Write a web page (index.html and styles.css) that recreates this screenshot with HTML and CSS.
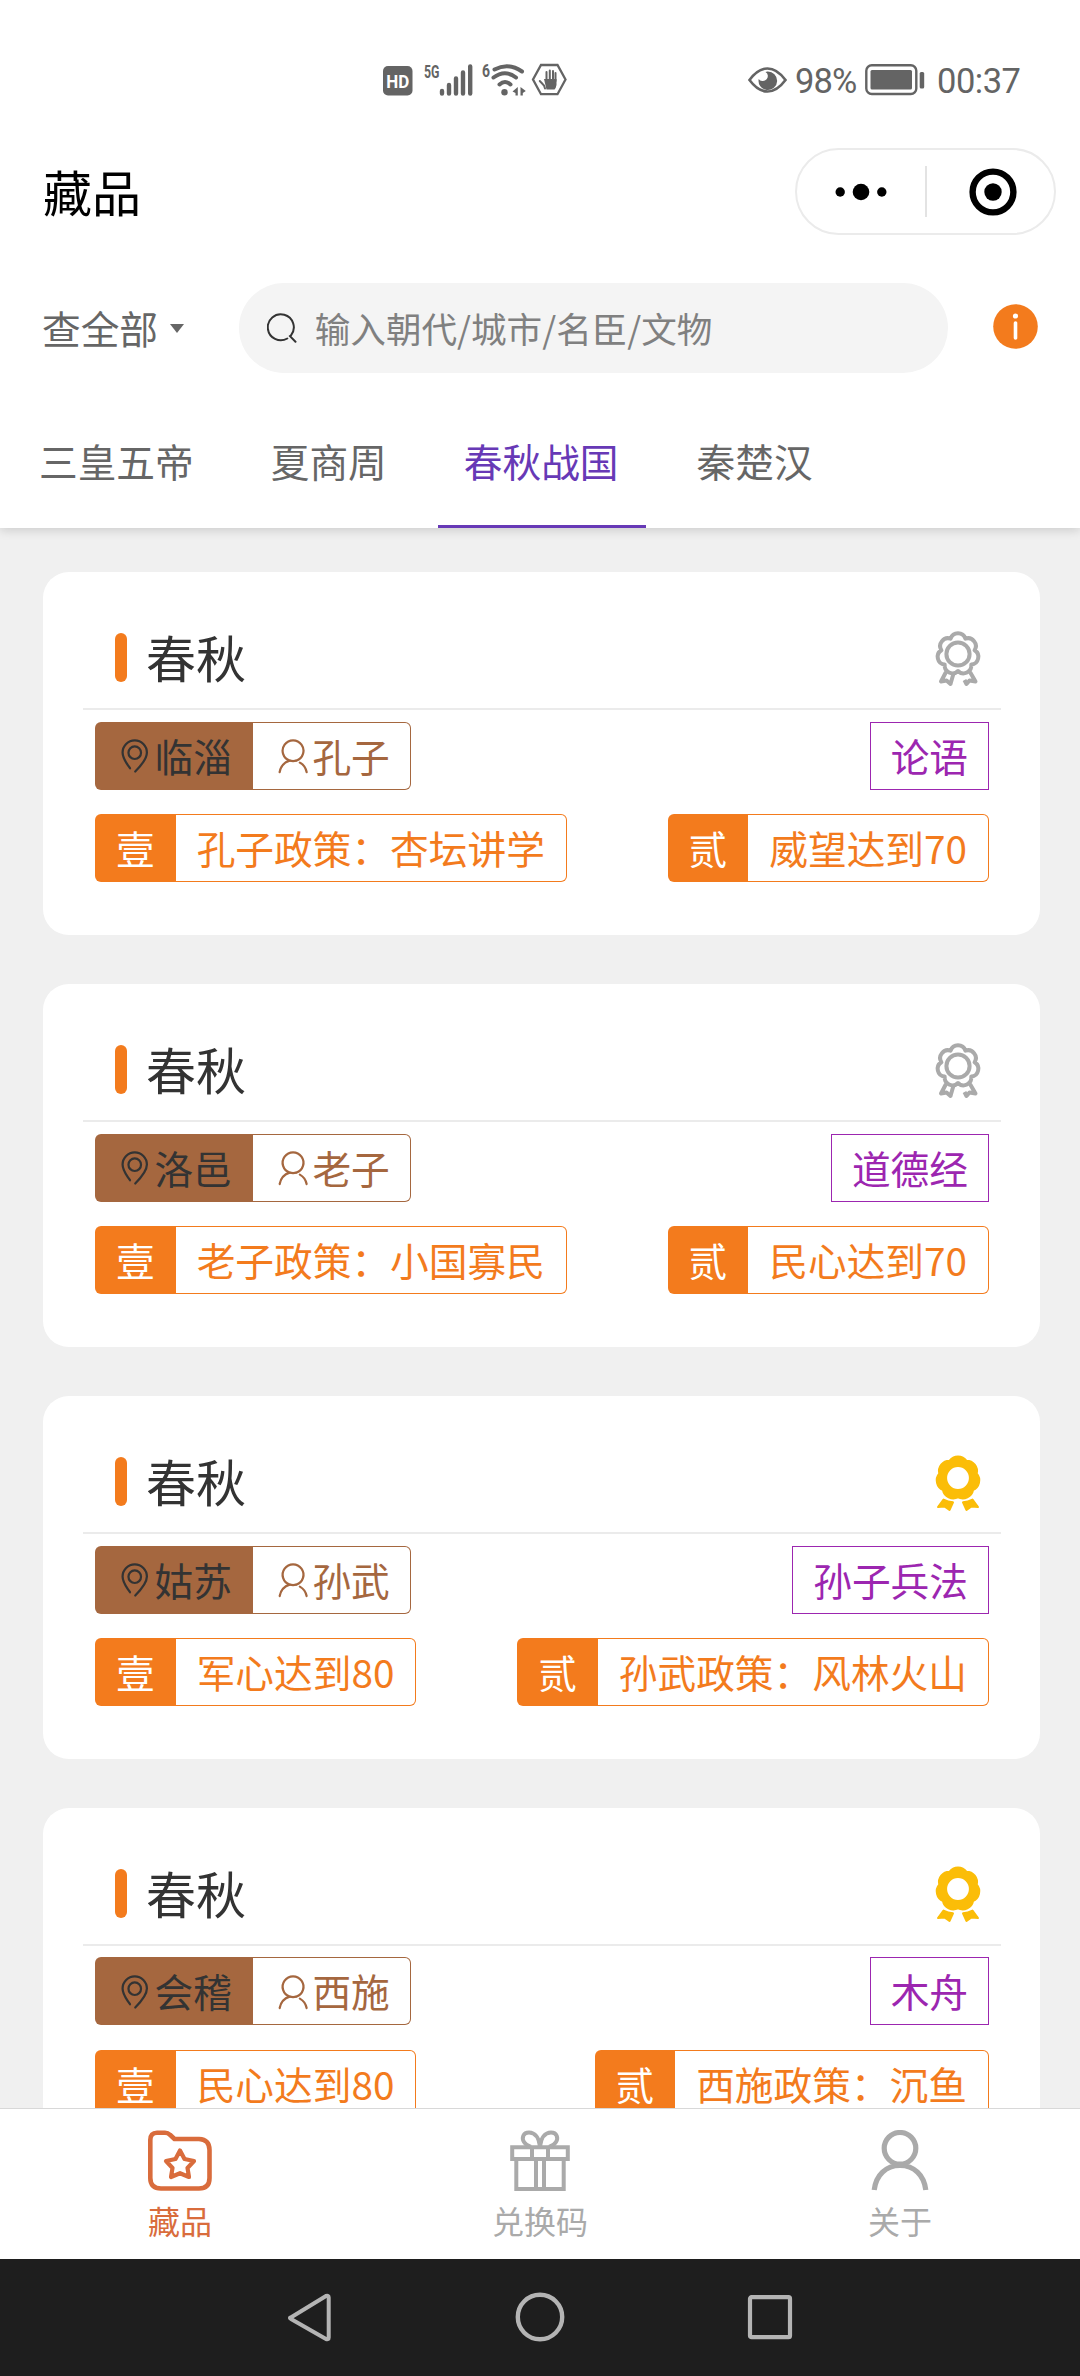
FILE: index.html
```html
<!DOCTYPE html>
<html lang="zh-CN">
<head>
<meta charset="utf-8">
<title>藏品</title>
<link rel="stylesheet" href="styles.css">
</head>
<body>
<svg class="sprite" width="0" height="0" aria-hidden="true">
  <symbol id="pin" viewBox="0 0 38 38">
    <path d="M11.5 28.5C8.5 24 6.5 20.5 6.5 16.3a12 12 0 0 1 24 0C30.500 22.500 25.500 28.500 19 35M11.500 28.500l2.300 3.300" fill="none" stroke="currentColor" stroke-width="2.200" stroke-linecap="round"/>
    <circle cx="18.500" cy="16.500" r="6.200" fill="none" stroke="currentColor" stroke-width="2.200"/>
  </symbol>
  <symbol id="person" viewBox="0 0 38 38">
    <path d="M15.500 24.300a10.300 10.300 0 1 1 6.600 0M15.500 24.300C10 26 6.500 30.500 5.600 35.600M25.500 26.300C29.500 28.500 31.500 32 32.200 35.600" fill="none" stroke="currentColor" stroke-width="2.200" stroke-linecap="round"/>
    <path d="M15.500 24.300q3.300.9 6.600 0" fill="none" stroke="currentColor" stroke-width="2.200"/>
  </symbol>
  <symbol id="medal" viewBox="-24 -24 48 60">
    <g fill="none" stroke="currentColor" stroke-width="4" stroke-linejoin="round">
      <path d="M-7.400 -15.300A7.800 7.800 0 0 1 7.400 -15.300A7.800 7.800 0 0 1 16.600 -3.800A7.800 7.800 0 0 1 13.300 10.600A7.800 7.800 0 0 1 0 17A7.800 7.800 0 0 1 -13.300 10.600A7.800 7.800 0 0 1 -16.600 -3.800A7.800 7.800 0 0 1 -7.400 -15.300Z"/>
      <circle r="11.600"/>
      <path d="M-12 18L-17 27.500L-11.500 26.500L-7.500 30L-4.500 19.500M12 18L17.500 27.500L11.500 26.500L8.500 30L6.500 26"/>
    </g>
  </symbol>
  <symbol id="medal-on" viewBox="-24 -24 48 60">
    <path fill="currentColor" fill-rule="evenodd" stroke="currentColor" stroke-width="3" stroke-linejoin="round" d="M-8.100 -16.800A10 10 0 0 1 8.100 -16.800A10 10 0 0 1 18.200 -4.200A10 10 0 0 1 14.600 11.700A10 10 0 0 1 0 18.700A10 10 0 0 1 -14.600 11.700A10 10 0 0 1 -18.200 -4.200A10 10 0 0 1 -8.100 -16.800ZM0 -12.400A12.400 12.400 0 1 0 0 12.400A12.400 12.400 0 1 0 0 -12.400Z"/>
    <path fill="currentColor" stroke="currentColor" stroke-width="2" stroke-linejoin="round" d="M-14.500 21.500L-20 29L-13.500 28.500L-8.500 32L-5 24.300Q-10 24 -14.500 21.500ZM14.500 21.500L20 29L13.500 28.500L8.500 32L5 24.300Q10 24 14.500 21.500Z"/>
  </symbol>
</svg>

<div class="screen">
  <header class="top">
    <div class="status">
      <svg class="status-left" viewBox="0 0 190 36">
        <rect x="0" y="4" width="29.500" height="29.500" rx="5" fill="#646464"/>
        <text x="14.700" y="25.800" class="hd" textLength="23" lengthAdjust="spacingAndGlyphs">HD</text>
        <text x="41" y="15.800" class="net" textLength="15.500" lengthAdjust="spacingAndGlyphs">5G</text>
        <text x="99" y="14.800" class="net" textLength="8" lengthAdjust="spacingAndGlyphs">6</text>
        <g stroke="#646464" stroke-width="4.400" stroke-linecap="round">
          <path d="M59 29v2.500M66 23v8.500M73 16.500v15M80 10.500v21M87.200 4.500v27"/>
        </g>
        <g fill="none" stroke="#646464" stroke-width="4" stroke-linecap="round">
          <path d="M111.500 7.500q14-7.500 27.500 2"/>
          <path d="M110.500 15.500q11.500-8.500 22.500 0"/>
          <path d="M116.500 22.500q5.500-5 11 0"/>
        </g>
        <circle cx="121.500" cy="30.300" r="3.200" fill="#646464"/>
        <path d="M134.800 25v8.500h-2.300v-2.500l-3-1.500zM137.500 25v8.500h2.300v-2.500l3-2z" fill="#646464"/>
        <path d="M158 3h16.500l8 14.500-8 14.700H158l-8-14.700z" fill="none" stroke="#646464" stroke-width="2.300"/>
        <path d="M162 26.500l-1-3-4.200-4.500M163.500 18V10M166.800 18V8.500M170 18V9M172.500 19V11" fill="none" stroke="#646464" stroke-width="2" stroke-linecap="round"/>
        <path d="M161 17h12.500v6q-.5 3-2 4.500h-8z" fill="#646464"/>
      </svg>
      <div class="status-right">
        <svg class="eye" viewBox="0 0 39 28">
          <path d="M1.500 14Q10 2.500 19.500 2.500T37.500 14Q29 25.500 19.500 25.500T1.500 14Z" fill="none" stroke="#646464" stroke-width="2.600"/>
          <path d="M19.500 5.500a9.300 9.300 0 1 1-8.800 7.500q1.500 2.500 4.300 2a5 5 0 0 0 4.800-5.500q-.1-2.500-2.300-3.500z" fill="#646464"/>
        </svg>
        <span class="percent">98%</span>
        <svg class="battery" viewBox="0 0 60 32">
          <rect x="1.300" y="1.300" width="50" height="28.700" rx="5.500" fill="none" stroke="#646464" stroke-width="2.400"/>
          <rect x="5.500" y="6" width="41.500" height="19.500" rx="1.500" fill="#646464"/>
          <rect x="54.700" y="8" width="4.500" height="16.500" rx="1.500" fill="#646464"/>
        </svg>
        <span class="clock">00:37</span>
      </div>
    </div>

    <div class="title-bar">
      <h1 class="title">藏品</h1>
      <div class="capsule">
        <svg class="dots" viewBox="0 0 52 18"><circle cx="5.200" cy="9" r="4.700"/><circle cx="26" cy="9" r="8.300"/><circle cx="46.800" cy="9" r="4.700"/></svg>
        <span class="capsule-line"></span>
        <svg class="target" viewBox="0 0 48 48"><circle cx="24" cy="24" r="20.400" fill="none" stroke="#000" stroke-width="6.400"/><circle cx="24" cy="24" r="8.700"/></svg>
      </div>
    </div>

    <div class="search-row">
      <div class="filter"><span>查全部</span><span class="caret"></span></div>
      <div class="search">
        <svg class="search-icon" viewBox="0 0 30 30"><path d="M20.300 25.500A13 13 0 1 1 24 22.300l-1 .8 5.500 5.700" fill="none" stroke="#333" stroke-width="2" stroke-linecap="round"/></svg>
        <span>输入朝代/城市/名臣/文物</span>
      </div>
      <svg class="info" viewBox="0 0 45 45"><circle cx="22.500" cy="22.500" r="22.300" fill="#f37b1d"/><circle cx="22.500" cy="12" r="2.600" fill="#fff"/><path d="M22.500 19v15" stroke="#fff" stroke-width="3.600" stroke-linecap="round"/></svg>
    </div>

    <nav class="tabs">
      <span class="tab">三皇五帝</span>
      <span class="tab">夏商周</span>
      <span class="tab active">春秋战国</span>
      <span class="tab">秦楚汉</span>
    </nav>
  </header>

  <main class="list">
    <article class="card">
      <div class="card-head"><span class="bar"></span><h2>春秋</h2><svg class="medal"><use href="#medal"/></svg></div>
      <div class="rows">
        <div class="row">
          <div class="tag brown"><span class="fill"><svg><use href="#pin"/></svg>临淄</span><span class="line"><svg><use href="#person"/></svg>孔子</span></div>
          <div class="relic">论语</div>
        </div>
        <div class="row">
          <div class="tag orange"><span class="fill">壹</span><span class="line">孔子政策：杏坛讲学</span></div>
          <div class="tag orange"><span class="fill">贰</span><span class="line">威望达到70</span></div>
        </div>
      </div>
    </article>

    <article class="card">
      <div class="card-head"><span class="bar"></span><h2>春秋</h2><svg class="medal"><use href="#medal"/></svg></div>
      <div class="rows">
        <div class="row">
          <div class="tag brown"><span class="fill"><svg><use href="#pin"/></svg>洛邑</span><span class="line"><svg><use href="#person"/></svg>老子</span></div>
          <div class="relic">道德经</div>
        </div>
        <div class="row">
          <div class="tag orange"><span class="fill">壹</span><span class="line">老子政策：小国寡民</span></div>
          <div class="tag orange"><span class="fill">贰</span><span class="line">民心达到70</span></div>
        </div>
      </div>
    </article>

    <article class="card">
      <div class="card-head"><span class="bar"></span><h2>春秋</h2><svg class="medal on"><use href="#medal-on"/></svg></div>
      <div class="rows">
        <div class="row">
          <div class="tag brown"><span class="fill"><svg><use href="#pin"/></svg>姑苏</span><span class="line"><svg><use href="#person"/></svg>孙武</span></div>
          <div class="relic">孙子兵法</div>
        </div>
        <div class="row">
          <div class="tag orange"><span class="fill">壹</span><span class="line">军心达到80</span></div>
          <div class="tag orange"><span class="fill">贰</span><span class="line">孙武政策：风林火山</span></div>
        </div>
      </div>
    </article>

    <article class="card">
      <div class="card-head"><span class="bar"></span><h2>春秋</h2><svg class="medal on"><use href="#medal-on"/></svg></div>
      <div class="rows">
        <div class="row">
          <div class="tag brown"><span class="fill"><svg><use href="#pin"/></svg>会稽</span><span class="line"><svg><use href="#person"/></svg>西施</span></div>
          <div class="relic">木舟</div>
        </div>
        <div class="row">
          <div class="tag orange"><span class="fill">壹</span><span class="line">民心达到80</span></div>
          <div class="tag orange"><span class="fill">贰</span><span class="line">西施政策：沉鱼</span></div>
        </div>
      </div>
    </article>
  </main>

  <footer class="tabbar">
    <div class="tabbar-item selected">
      <svg viewBox="0 0 66 62"><g fill="none" stroke="currentColor" stroke-linejoin="round">
        <path d="M3.300 10Q3.300 2.800 10 2.800H18Q21 2.800 23 4.800L27.500 9H52Q62.500 9.500 62.500 20V48Q62.500 58.500 52 58.500H14Q3.300 58.500 3.300 48Z" stroke-width="4.600"/>
        <path d="M33 20.500L37.500 29L47 31L40.500 38L42 47L33 43.200L24 47L25.500 38L19 31L28.500 29Z" stroke-width="4.200"/>
      </g></svg>
      <span>藏品</span>
    </div>
    <div class="tabbar-item">
      <svg viewBox="0 0 66 62"><g fill="none" stroke="currentColor" stroke-width="4">
        <path d="M5.200 17.300H60.800V29H5.200ZM25 17.300V29M41 17.300V29M9.300 29V59H56.700V29M29 29V59M37 29V59"/>
        <path d="M33 16.500C32 8 28 2.500 22 2.500C16 2.500 14.500 8 17 12C18.500 14.500 21 16 24 17M33 16.500C34 8 38 2.500 44 2.500C50 2.500 51.500 8 49 12C47.500 14.500 45 16 42 17"/>
      </g></svg>
      <span>兑换码</span>
    </div>
    <div class="tabbar-item">
      <svg viewBox="0 0 66 62"><g fill="none" stroke="currentColor" stroke-width="5.200">
        <circle cx="33" cy="18.300" r="15.800"/>
        <path d="M7.200 60C9 45 19 35.500 33 35.500S57 45 58.800 60"/>
      </g></svg>
      <span>关于</span>
    </div>
  </footer>

  <div class="system-nav">
    <svg viewBox="0 0 52 52"><path d="M6.800 26.500L42 5Q44.700 4 44.700 6.500V46.500Q44.700 49 42 48L7 28Q5 26.500 6.800 26.500Z" fill="none" stroke="#b4b4b4" stroke-width="4" stroke-linejoin="round"/></svg>
    <svg viewBox="0 0 52 52"><circle cx="26" cy="26" r="22.200" fill="none" stroke="#b4b4b4" stroke-width="4.400"/></svg>
    <svg viewBox="0 0 52 52"><rect x="6" y="6.200" width="40" height="40" rx="1.500" fill="none" stroke="#b4b4b4" stroke-width="4.200"/></svg>
  </div>
</div>
</body>
</html>
```
FILE: styles.css
```css
* { box-sizing: border-box; }

body {
  margin: 0;
  background: #f0f0f0;
  color: #333;
  font-family: "Noto Sans CJK SC", sans-serif;
  font-size: 38.7px;
}

h1, h2 { margin: 0; font-weight: 400; }
svg { display: block; flex: none; }
.sprite { position: absolute; }

.screen {
  width: 1080px;
  height: 2376px;
  display: flex;
  flex-direction: column;
  overflow: hidden;
}

/* header */
.top {
  flex: none;
  height: 528px;
  background: #fff;
  box-shadow: 0 2px 10px rgba(0, 0, 0, .16);
  z-index: 1;
}

.status {
  height: 148px;
  padding: 62px 61px 0 383px;
  display: flex;
  justify-content: space-between;
  align-items: flex-start;
}
.status-left { width: 190px; height: 36px; overflow: visible; }
.status-left .hd { font: 700 19px Roboto, sans-serif; fill: #fff; text-anchor: middle; }
.status-left .net { font: 700 19px Roboto, sans-serif; fill: #646464; }
.status-right {
  display: flex;
  align-items: center;
  height: 36px;
  color: #646464;
  font: 400 34.5px/36px Roboto, sans-serif;
}
.eye { width: 39px; height: 28px; }
.percent { width: 63px; margin-left: 8px; letter-spacing: -.9px; padding-top: 2px; }
.battery { width: 60px; height: 32px; margin-left: 7px; }
.clock { width: 82px; margin-left: 12px; letter-spacing: -.5px; padding-top: 2px; }

.title-bar {
  height: 87px;
  padding: 0 24px 0 43px;
  display: flex;
  align-items: center;
  justify-content: space-between;
}
.title { padding-bottom: 2px; font-size: 49px; line-height: 72px; color: #000; }
.capsule {
  width: 261px;
  height: 87px;
  border: 2px solid #ebebeb;
  border-radius: 44px;
  display: grid;
  grid-template-columns: 1fr 2px 1fr;
  align-items: center;
  justify-items: center;
}
.dots { width: 52px; height: 18px; }
.capsule-line { width: 2px; height: 51px; background: #e3e3e3; }
.target { width: 48px; height: 48px; margin-left: 6px; }

.search-row {
  height: 90px;
  margin-top: 48px;
  padding: 0 42px 0 42px;
  display: flex;
  align-items: center;
}
.filter {
  width: 197px;
  display: flex;
  align-items: center;
  gap: 12px;
  color: #666;
}
.filter span:first-child { padding-bottom: 2px; }
.caret {
  border: 7.5px solid transparent;
  border-top: 9px solid #666;
  border-bottom: 0;
}
.search {
  width: 710px;
  height: 90px;
  padding-left: 28px;
  border-radius: 45px;
  background: #f4f4f4;
  display: flex;
  align-items: center;
  gap: 18px;
  color: #808080;
  font-size: 35.6px;
}
.search span { padding-bottom: 1px; }
.search-icon { width: 30px; height: 30px; }
.info { width: 45px; height: 45px; margin: -3px 0 0 45px; }

.tabs {
  height: 155px;
  padding-left: 13px;
  display: flex;
  gap: 24.500px;
}
.tab {
  height: 155px;
  padding: 20px 26.500px 0 26px;
  line-height: 135px;
  color: #666;
}
.tab.active { padding-right: 27.500px; color: #6739b6; border-bottom: 3px solid #6739b6; }

/* cards */
.list {
  flex: 1;
  min-height: 0;
  overflow: hidden;
  padding: 44.300px 40px 0 43px;
  display: flex;
  flex-direction: column;
  gap: 49.400px;
}
.card {
  flex: none;
  height: 362.500px;
  padding: 0 39px 0 40px;
  border-radius: 26px;
  background: #fff;
}
.card-head {
  height: 138px;
  padding: 36px 19px 0 32px;
  border-bottom: 2px solid #ebebeb;
  display: flex;
  align-items: center;
}
.bar { width: 12px; height: 49px; margin-top: -1px; border-radius: 6px; background: #f37b1d; }
h2 { margin-left: 19px; padding-bottom: 4px; font-size: 50px; line-height: 70px; }
.medal { width: 48px; height: 60px; margin: 4px 0 0 auto; color: #aaa; }
.medal.on { color: #fbbd08; margin-top: 3px; }

.rows {
  padding: 11.500px 12px 0;
  display: flex;
  flex-direction: column;
  gap: 24.500px;
}
.row { display: flex; justify-content: space-between; }
.tag { display: flex; height: 68px; }
.tag span {
  display: flex;
  align-items: center;
  padding: 0 21px 1px;
  line-height: 65px;
  white-space: nowrap;
}
.tag svg { width: 38.500px; height: 38.500px; }
.fill { border-radius: 6px 0 0 6px; }
.line { border: 1px solid; border-left: 0; border-radius: 0 6px 6px 0; }
.brown .fill { background: #a5673f; }
.brown .line { color: #a5673f; padding-right: 20px; }
.orange .fill { background: #f37b1d; color: #fff; }
.orange .line { color: #f37b1d; }
.relic {
  height: 68px;
  padding: 0 20px;
  border: 1px solid #9c26b0;
  line-height: 64px;
  color: #9c26b0;
}

/* bottom navigation */
.tabbar {
  flex: none;
  height: 151px;
  border-top: 1px solid #d8d8d8;
  background: #fff;
  display: grid;
  grid-template-columns: repeat(3, 1fr);
  z-index: 1;
}
.tabbar-item {
  display: flex;
  flex-direction: column;
  align-items: center;
  padding-top: 21px;
  color: #aaa;
  font-size: 32px;
}
.tabbar-item svg { width: 66px; height: 62px; }
.tabbar-item span { margin-top: 8px; line-height: 40px; }
.tabbar-item.selected { color: #d96c3c; }

.system-nav {
  flex: none;
  height: 117px;
  padding-bottom: 1px;
  background: #1e1e1e;
  display: flex;
  justify-content: center;
  align-items: center;
  gap: 178px;
}
.system-nav svg { width: 52px; height: 52px; }
```
